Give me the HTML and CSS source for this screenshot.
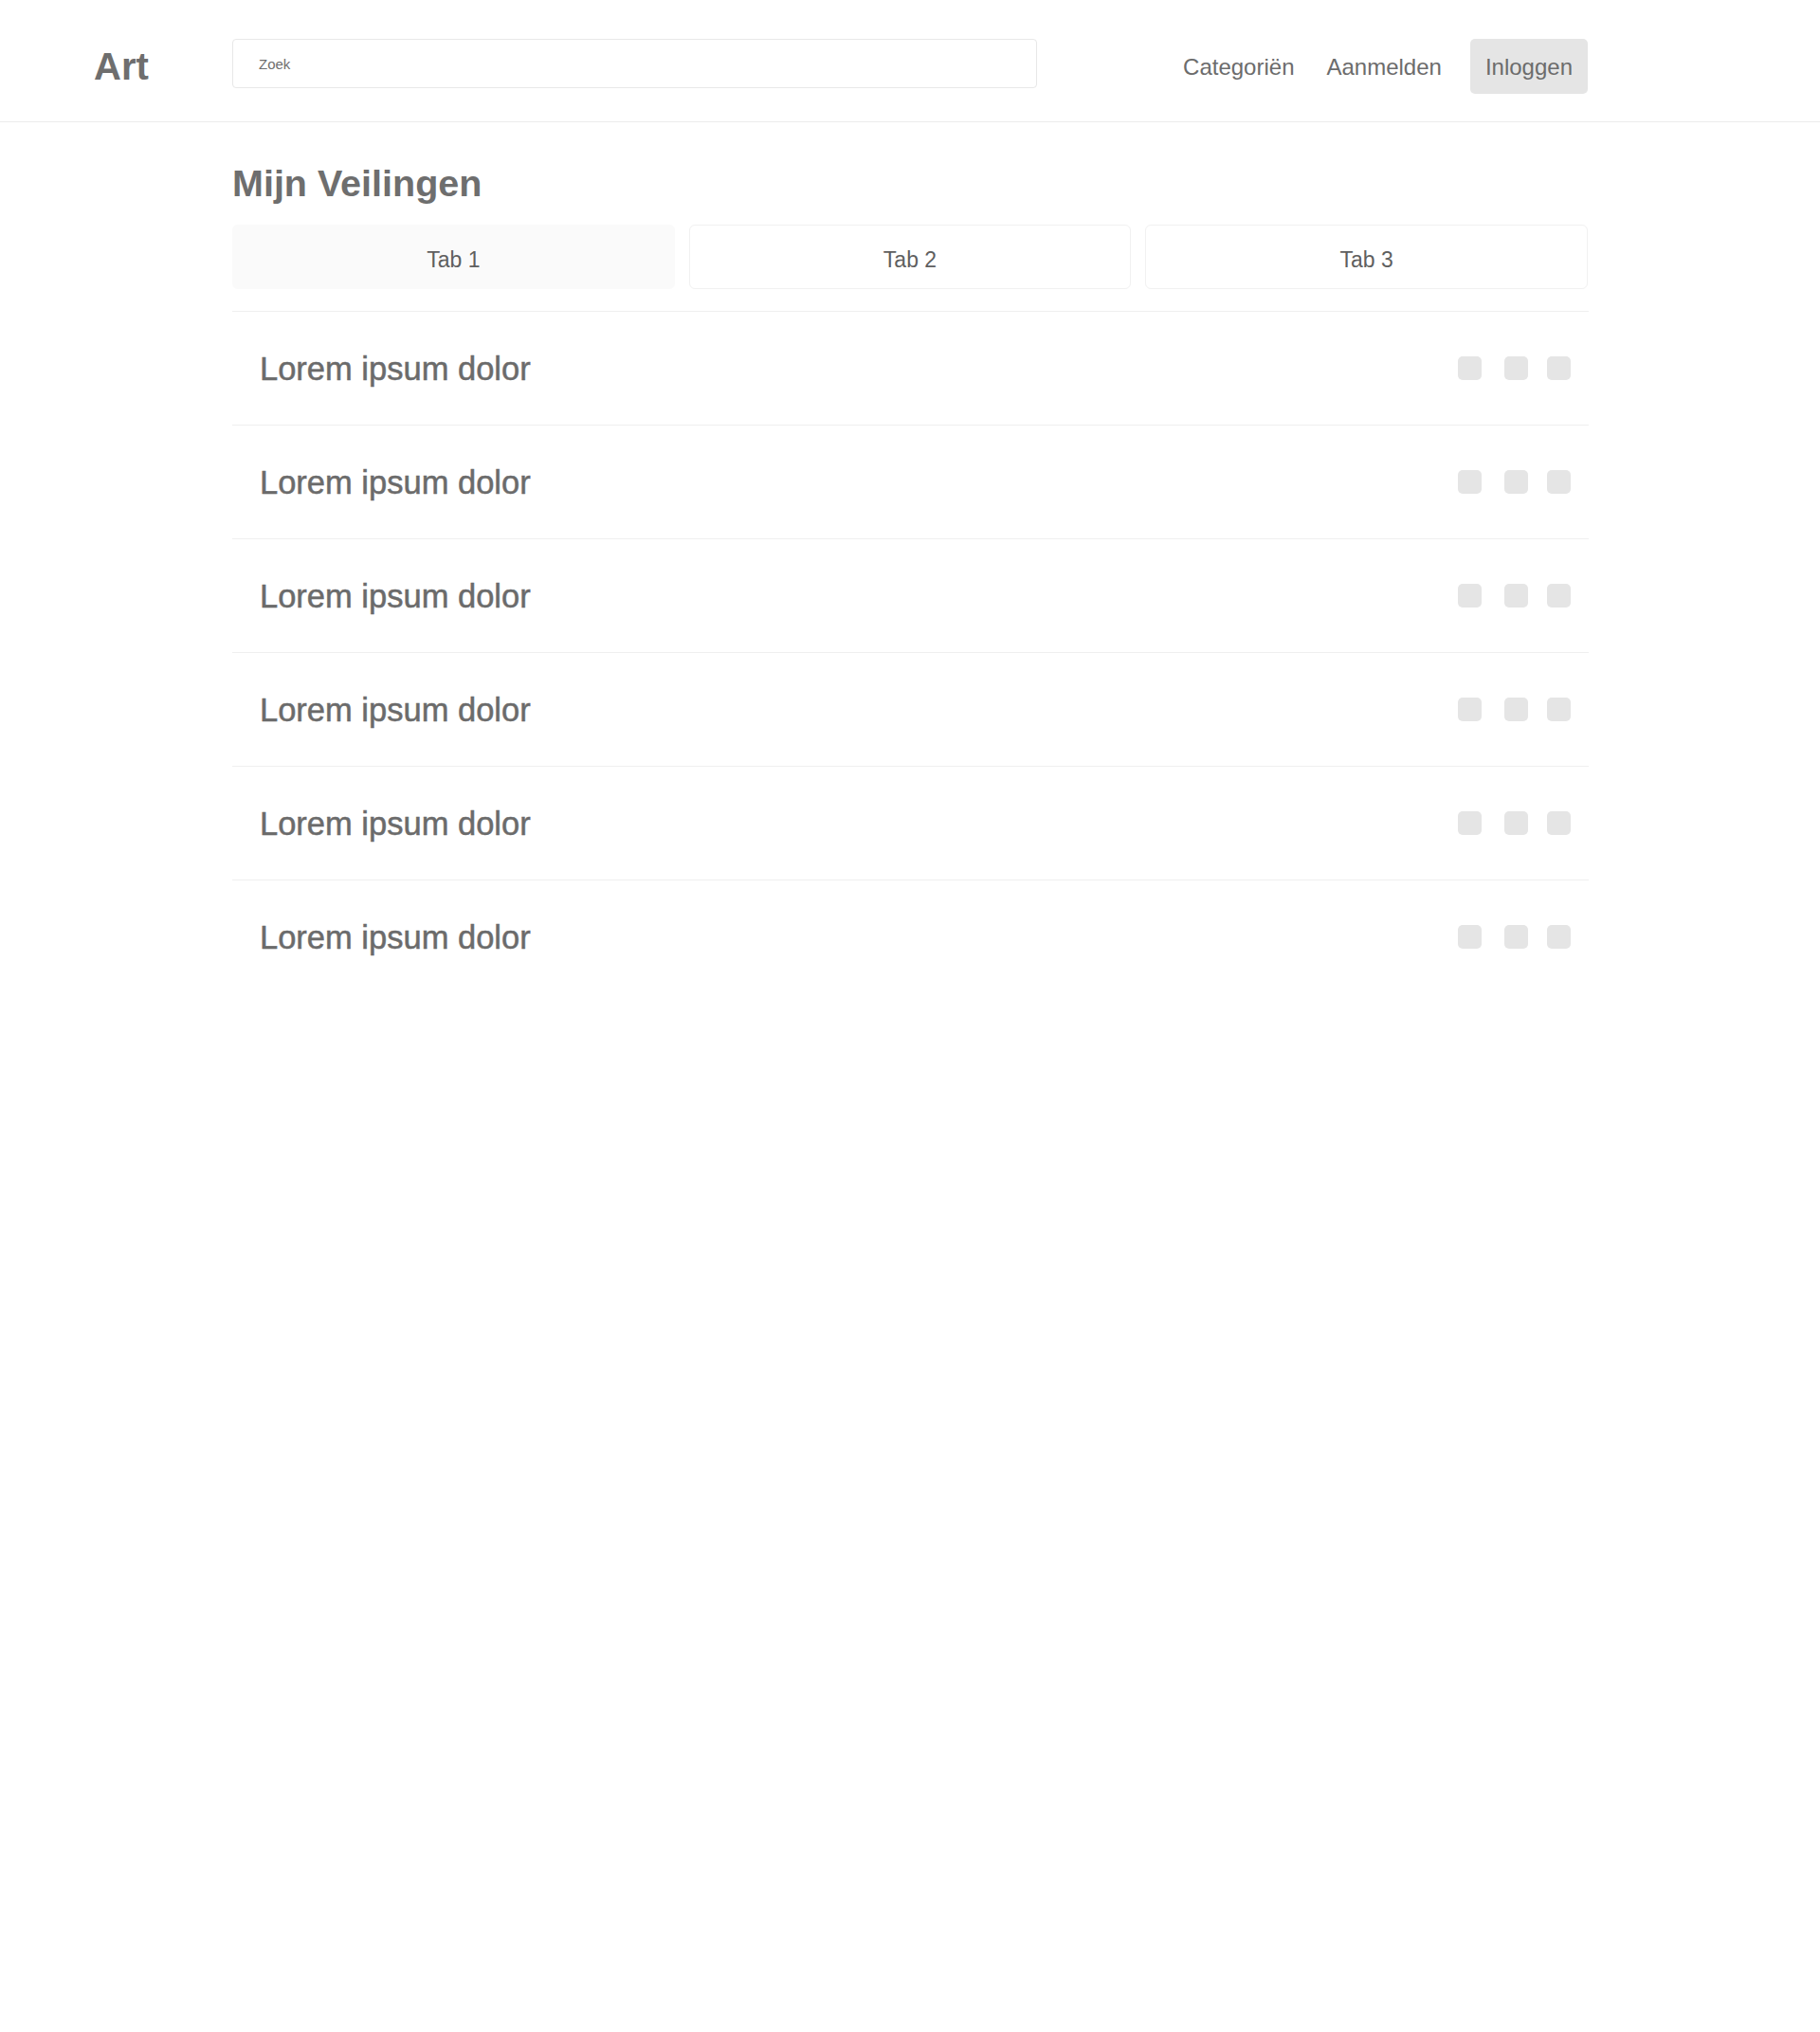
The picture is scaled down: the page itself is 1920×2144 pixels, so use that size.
FILE: index.html
```html
<!DOCTYPE html>
<html lang="nl">
<head>
<meta charset="utf-8">
<title>Art - Mijn Veilingen</title>
<link rel="stylesheet" href="styles.css">
</head>
<body>
<header class="topbar">
  <div class="logo">Art</div>
  <div class="search"><span class="search-placeholder">Zoek</span></div>
  <nav class="nav">
    <a class="nav-link">Categoriën</a>
    <a class="nav-link nav-link-second">Aanmelden</a>
    <a class="nav-button">Inloggen</a>
  </nav>
</header>
<main class="content">
  <h1 class="title">Mijn Veilingen</h1>
  <div class="tabs">
    <div class="tab tab-active">Tab 1</div>
    <div class="tab">Tab 2</div>
    <div class="tab">Tab 3</div>
  </div>
  <ul class="list">
    <li class="row"><span class="row-title">Lorem ipsum dolor</span><span class="actions"><i class="act act-1"></i><i class="act act-2"></i><i class="act"></i></span></li>
    <li class="row"><span class="row-title">Lorem ipsum dolor</span><span class="actions"><i class="act act-1"></i><i class="act act-2"></i><i class="act"></i></span></li>
    <li class="row"><span class="row-title">Lorem ipsum dolor</span><span class="actions"><i class="act act-1"></i><i class="act act-2"></i><i class="act"></i></span></li>
    <li class="row"><span class="row-title">Lorem ipsum dolor</span><span class="actions"><i class="act act-1"></i><i class="act act-2"></i><i class="act"></i></span></li>
    <li class="row"><span class="row-title">Lorem ipsum dolor</span><span class="actions"><i class="act act-1"></i><i class="act act-2"></i><i class="act"></i></span></li>
    <li class="row"><span class="row-title">Lorem ipsum dolor</span><span class="actions"><i class="act act-1"></i><i class="act act-2"></i><i class="act"></i></span></li>
  </ul>
</main>
</body>
</html>
```

FILE: styles.css
```css
* { box-sizing: border-box; }
html, body {
  margin: 0;
  padding: 0;
  background: #ffffff;
  font-family: "Liberation Sans", Arial, Helvetica, sans-serif;
  color: #6c6c6c;
}

.topbar {
  display: flex;
  align-items: flex-start;
  height: 129px;
  padding: 41px 245px 0 99px;
  border-bottom: 1px solid #ececec;
}

.logo {
  width: 146px;
  margin-top: 9px;
  font-size: 40px;
  line-height: 40px;
  font-weight: bold;
  color: #6e6e6e;
}

.search {
  width: 849px;
  height: 52px;
  border: 1px solid #e8e8e8;
  border-radius: 4px;
  display: flex;
  align-items: center;
  padding-left: 27px;
}

.search-placeholder {
  font-size: 15px;
  color: #6e6e6e;
}

.nav {
  margin-left: auto;
  display: flex;
  align-items: center;
  height: 58px;
  font-size: 24px;
  color: #6c6c6c;
}

.nav-link {
  display: flex;
  align-items: center;
  height: 58px;
  padding-top: 2px;
}

.nav-link-second { margin-left: 34px; }

.nav-button {
  margin-left: 30px;
  height: 58px;
  padding: 2px 16px 0 16px;
  display: flex;
  align-items: center;
  background: #e5e5e5;
  border-radius: 5px;
}

.content {
  width: 1430px;
  margin: 0 auto;
  padding-top: 40px;
}

.title {
  margin: 0;
  font-size: 39.5px;
  line-height: 48px;
  font-weight: bold;
  color: #6e6e6e;
}

.tabs {
  margin-top: 20px;
  display: grid;
  grid-template-columns: repeat(3, 1fr);
  gap: 15px;
}

.tab {
  height: 68px;
  display: flex;
  align-items: center;
  justify-content: center;
  padding-top: 7px;
  font-size: 23px;
  color: #5f5f5f;
  border: 1px solid #f1f1f1;
  border-radius: 6px;
  background: #ffffff;
}

.tab-active {
  background: #fafafa;
  border-color: #fafafa;
}

.list {
  list-style: none;
  margin: 23px 0 0 0;
  padding: 0;
  width: 1431px;
}

.row {
  height: 120px;
  border-top: 1px solid #efefef;
  display: flex;
  align-items: center;
  justify-content: space-between;
  padding: 2px 19px 0 29px;
}

.row-title {
  font-size: 34.5px;
  color: #6b6b6b;
  -webkit-text-stroke: 0.5px #6b6b6b;
}

.actions {
  display: flex;
  align-items: center;
  margin-top: -2px;
}

.act {
  display: block;
  width: 25px;
  height: 25px;
  border-radius: 5px;
  background: #e5e5e5;
}

.act-1 { margin-right: 24px; }
.act-2 { margin-right: 20px; }
```
